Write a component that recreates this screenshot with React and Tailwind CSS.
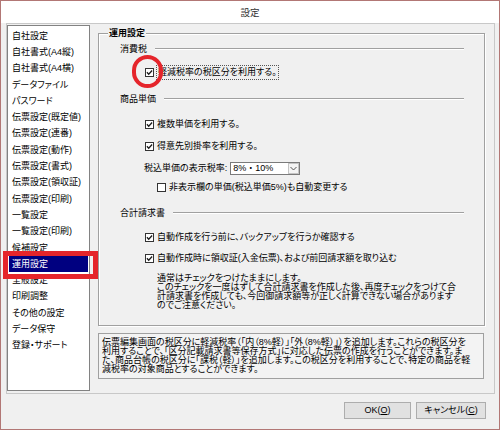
import React from "react";

const MENU = [
  "自社設定",
  "自社書式(A4縦)",
  "自社書式(A4横)",
  "データファイル",
  "パスワード",
  "伝票設定(既定値)",
  "伝票設定(連番)",
  "伝票設定(動作)",
  "伝票設定(書式)",
  "伝票設定(領収証)",
  "伝票設定(印刷)",
  "一覧設定",
  "一覧設定(印刷)",
  "候補設定",
  "運用設定",
  "全般設定",
  "印刷調整",
  "その他の設定",
  "データ保守",
  "登録・サポート",
];

const Check = ({ checked = true }) => (
  <span className="w-[9px] h-[9px] border border-[#333] bg-white flex items-center justify-center shrink-0">
    {checked && (
      <svg width="7" height="7" viewBox="0 0 7 7">
        <path d="M0.9 3.3 L2.7 5.2 L6.1 1.5" fill="none" stroke="#1a1a1a" strokeWidth="1.3" />
      </svg>
    )}
  </span>
);

const Section = ({ title, className = "" }) => (
  <div className={`flex items-center h-[12px] ml-[21px] mr-[20px] gap-[8px] ${className}`}>
    <span className="whitespace-nowrap">{title}</span>
    <div className="flex-1 border-t border-[#a0a0a0] border-b border-b-white" />
  </div>
);

const CheckRow = ({ children, className = "", checked = true }) => (
  <div className={`flex items-center h-[12px] gap-[3px] ${className}`}>
    <Check checked={checked} />
    <span className="whitespace-nowrap">{children}</span>
  </div>
);

export default function App() {
  return (
    <div className="relative w-[500px] h-[430px] border border-[#b27775] bg-[#f0f0f0] flex flex-col text-[9px] leading-none text-black font-['Liberation_Sans','Noto_Sans_CJK_JP',sans-serif] [font-feature-settings:'palt']">
      {/* title bar */}
      <div className="h-[22px] bg-white flex items-center justify-center text-[#333] text-[9.5px] pt-[2px]">
        設定
      </div>

      {/* main panel */}
      <div className="ml-[5px] w-[489px] h-[371px] border border-[#c8c8c8] flex">
        {/* left list */}
        <div className="mt-[1px] w-[83px] h-[366px] border border-[#828282] bg-white pt-[2px] px-[1px]">
          {MENU.map((m) => (
            <div
              key={m}
              className={`h-[16.3px] flex items-center pl-[3px] whitespace-nowrap ${
                m === "運用設定" ? "bg-[#000080] text-white" : ""
              }`}
            >
              {m}
            </div>
          ))}
        </div>

        {/* right column */}
        <div className="ml-[8px] mt-[9px] flex flex-col">
          <div className="relative w-[387px] h-[293px] border border-[#a0a0a0] shadow-[1px_1px_0_#fff,inset_1px_1px_0_#fff] pt-[9px] flex flex-col">
            <span className="absolute -top-[5px] left-[9px] bg-[#f0f0f0] px-[1px] font-bold">運用設定</span>

            <Section title="消費税" />
            <div className="relative flex items-center h-[14px] mt-[10px] ml-[46px] gap-[2px]">
              <Check />
              <span className="h-[15px] flex items-center border border-dotted border-[#555] px-[1px] whitespace-nowrap">
                軽減税率の税区分を利用する。
              </span>
              {/* red highlight circle */}
              <span className="absolute -left-[13px] -top-[10px] w-[31px] h-[33px] rounded-full border-[4px] border-[#e5252b]" />
            </div>

            <Section title="商品単価" className="mt-[14px]" />
            <CheckRow className="mt-[13px] ml-[46px]">複数単価を利用する。</CheckRow>
            <CheckRow className="mt-[10px] ml-[46px]">得意先別掛率を利用する。</CheckRow>
            <div className="flex items-center h-[12px] mt-[10px] ml-[45px] gap-[3px]">
              <span className="whitespace-nowrap">税込単価の表示税率:</span>
              <div className="w-[70px] h-[13px] border border-[#7a7a7a] bg-white flex items-center">
                <span className="flex-1 pl-[2px] whitespace-nowrap [font-feature-settings:normal]">8%・10%</span>
                <span className="w-[11px] h-[11px] border border-[#c4c4c4] bg-[#f4f4f4] flex items-center justify-center">
                  <svg width="7" height="5" viewBox="0 0 7 5">
                    <path d="M0.5 1 L3.5 4 L6.5 1" fill="none" stroke="#555" strokeWidth="1" />
                  </svg>
                </span>
              </div>
            </div>
            <CheckRow className="mt-[7px] ml-[58px]" checked={false}>
              非表示欄の単価(税込単価5%)も自動変更する
            </CheckRow>

            <Section title="合計請求書" className="mt-[14px]" />
            <CheckRow className="mt-[12px] ml-[46px]">自動作成を行う前に、バックアップを行うか確認する</CheckRow>
            <CheckRow className="mt-[9px] ml-[46px]">自動作成時に領収証(入金伝票)、および前回請求額を取り込む</CheckRow>
            <div className="mt-[10px] ml-[58px] leading-[9px] whitespace-nowrap">
              通常はチェックをつけたままにします。
              <br />
              このチェックを一度はずして合計請求書を作成した後、再度チェックをつけて合
              <br />
              計請求書を作成しても、今回御請求額等が正しく計算できない場合があります
              <br />
              のでご注意ください。
            </div>
          </div>

          <div className="mt-[7px] w-[386px] h-[46px] border border-[#a0a0a0] bg-[#f3f3f3] pt-[4px] pl-[3px] leading-[9px] whitespace-nowrap">
            伝票編集画面の税区分に軽減税率（「内（8%軽）」「外（8%軽）」）を追加します。これらの税区分を
            <br />
            利用することで、「区分記載請求書等保存方式」に対応した伝票の作成を行うことができます。ま
            <br />
            た、商品台帳の税区分に「課税（軽）」を追加します。この税区分を利用することで、特定の商品を軽
            <br />
            減税率の対象商品とすることができます。
          </div>
        </div>
      </div>

      {/* buttons */}
      <div className="mt-[8px] flex justify-end gap-[5px] pr-[13px]">
        <button className="w-[67px] h-[17px] border border-[#adadad] bg-[#e1e1e1] flex items-center justify-center">
          OK(<u>O</u>)
        </button>
        <button className="w-[70px] h-[17px] border border-[#adadad] bg-[#e1e1e1] flex items-center justify-center">
          キャンセル(<u>C</u>)
        </button>
      </div>

      {/* red highlight around the selected menu item */}
      <div className="absolute left-[2px] top-[250px] w-[95px] h-[28px] border-[5px] border-[#e5252b]" />
    </div>
  );
}
